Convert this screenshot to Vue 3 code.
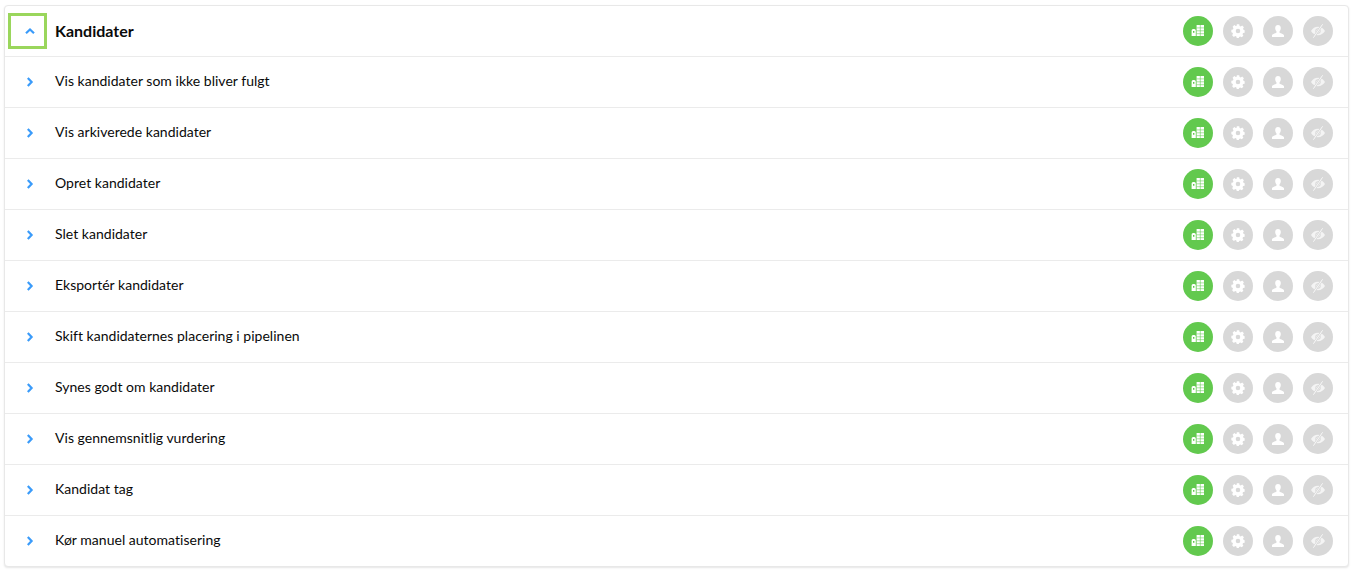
<script setup>
const rows = [
  'Vis kandidater som ikke bliver fulgt',
  'Vis arkiverede kandidater',
  'Opret kandidater',
  'Slet kandidater',
  'Eksportér kandidater',
  'Skift kandidaternes placering i pipelinen',
  'Synes godt om kandidater',
  'Vis gennemsnitlig vurdering',
  'Kandidat tag',
  'Kør manuel automatisering'
]
</script>

<template>
  <main class="page">
    <section class="card">
      <div v-for="(label, i) in ['Kandidater', ...rows]" :key="label" class="row" :class="{ head: i === 0 }">
        <button class="toggle" :class="{ focused: i === 0 }" type="button">
          <svg width="10" height="10" viewBox="0 0 10 10" :class="{ up: i === 0 }">
            <path d="M2.800 1 L6.600 5 L2.800 9" fill="none" stroke="#3a9bfa" stroke-width="2.200"/>
          </svg>
        </button>
        <span class="label">{{ label }}</span>
        <div class="icons">
          <span class="dot on">
            <svg width="14" height="14" viewBox="0 0 14 14" fill="#fff">
              <path fill-rule="evenodd" d="M.6 6.500A1.500 1.500 0 0 1 2.100 5h1.200a1.500 1.500 0 0 1 1.500 1.500V12H.6zM2 7v1.700h1.400V7z"/>
              <path d="M5.600 1H13v11H5.600z"/>
              <path d="M9.300 1v11M5.600 3.900H13M5.600 6.800H13M5.600 9.700H13" stroke="#62c94e" stroke-width="0.550" fill="none"/>
            </svg>
          </span>
          <span class="dot">
            <svg width="14" height="14" viewBox="0 0 14 14" fill="#fff">
              <path fill-rule="evenodd" d="M5.700 0h2.600l.4 1.700 1.200.5 1.500-.9 1.800 1.800-.9 1.500.5 1.200 1.200.4v2.600l-1.700.4-.5 1.200.9 1.500-1.800 1.800-1.500-.9-1.200.5-.4 1.200H5.700l-.4-1.700-1.200-.5-1.500.9L.8 11.500l.9-1.500-.5-1.200L0 8.300V5.700l1.700-.4.5-1.200-.9-1.500 1.800-1.800 1.500.9 1.200-.5zM7 4.600a2.400 2.400 0 1 0 0 4.800 2.400 2.400 0 0 0 0-4.800z" transform="translate(.35 .35) scale(.95)"/>
            </svg>
          </span>
          <span class="dot">
            <svg width="14" height="14" viewBox="0 0 14 14" fill="#fff">
              <path d="M7 1c1.700 0 2.800 1.300 2.800 3.100 0 1.400-.6 2.600-1.300 3.300v1c0 .7 4 1.200 4.500 2.800V13H1v-1.800c.5-1.600 4.500-2.100 4.500-2.800v-1C4.800 6.700 4.200 5.500 4.200 4.100 4.200 2.300 5.300 1 7 1z"/>
            </svg>
          </span>
          <span class="dot">
            <svg width="16" height="16" viewBox="0 0 16 16">
              <path fill-rule="evenodd" fill="#f4f4f4" d="M1 8c1.600-2.700 4-4.200 7-4.200s5.400 1.500 7 4.200c-1.600 2.700-4 4.200-7 4.200S2.600 10.700 1 8zM8 5.300a2.700 2.700 0 1 0 0 5.400 2.700 2.700 0 0 0 0-5.400z"/>
              <circle cx="8" cy="8" r="1.800" fill="#f4f4f4"/>
              <path d="M12.200 1.800 3.800 14.200" stroke="#d8d8d8" stroke-width="2.200"/>
              <path d="M12.600 1.300 3.400 14.700" stroke="#f8f8f8" stroke-width="1"/>
            </svg>
          </span>
        </div>
      </div>
    </section>
  </main>
</template>

<style scoped>
.page {
  width: 1363px;
  height: 575px;
  box-sizing: border-box;
  padding: 5px 14px 0 4px;
  background: #fff;
  font-family: Lato, "Open Sans", sans-serif;
}
.card {
  box-sizing: border-box;
  width: 1345px;
  border: 1px solid #e8e8e8;
  border-radius: 4px;
  box-shadow: 0 1px 2px rgba(0, 0, 0, 0.1);
  background: #fff;
}
.row {
  display: flex;
  align-items: center;
  height: 51px;
  box-sizing: border-box;
  padding: 0 15px 0 3px;
  border-bottom: 1px solid #ebebeb;
}
.row:last-child {
  height: 50px;
  border-bottom: 0;
}
.toggle {
  display: flex;
  align-items: center;
  justify-content: center;
  box-sizing: border-box;
  width: 39px;
  height: 36px;
  margin-right: 8px;
  padding: 0 0 0 4px;
  border: 0;
  background: transparent;
}
.toggle.focused {
  border: 3px solid #9ad65c;
}
.up {
  transform: rotate(-90deg);
}
.label {
  flex: 1;
  padding-bottom: 3px;
  font-size: 14px;
  letter-spacing: 0.02px;
  color: #0a0a0a;
}
.head .label {
  padding-bottom: 2px;
  font-size: 16px;
  font-weight: 700;
  letter-spacing: 0;
}
.icons {
  display: flex;
  gap: 10px;
}
.dot {
  display: flex;
  align-items: center;
  justify-content: center;
  width: 30px;
  height: 30px;
  border-radius: 50%;
  background: #d8d8d8;
}
.dot.on {
  background: #62c94e;
}
</style>
